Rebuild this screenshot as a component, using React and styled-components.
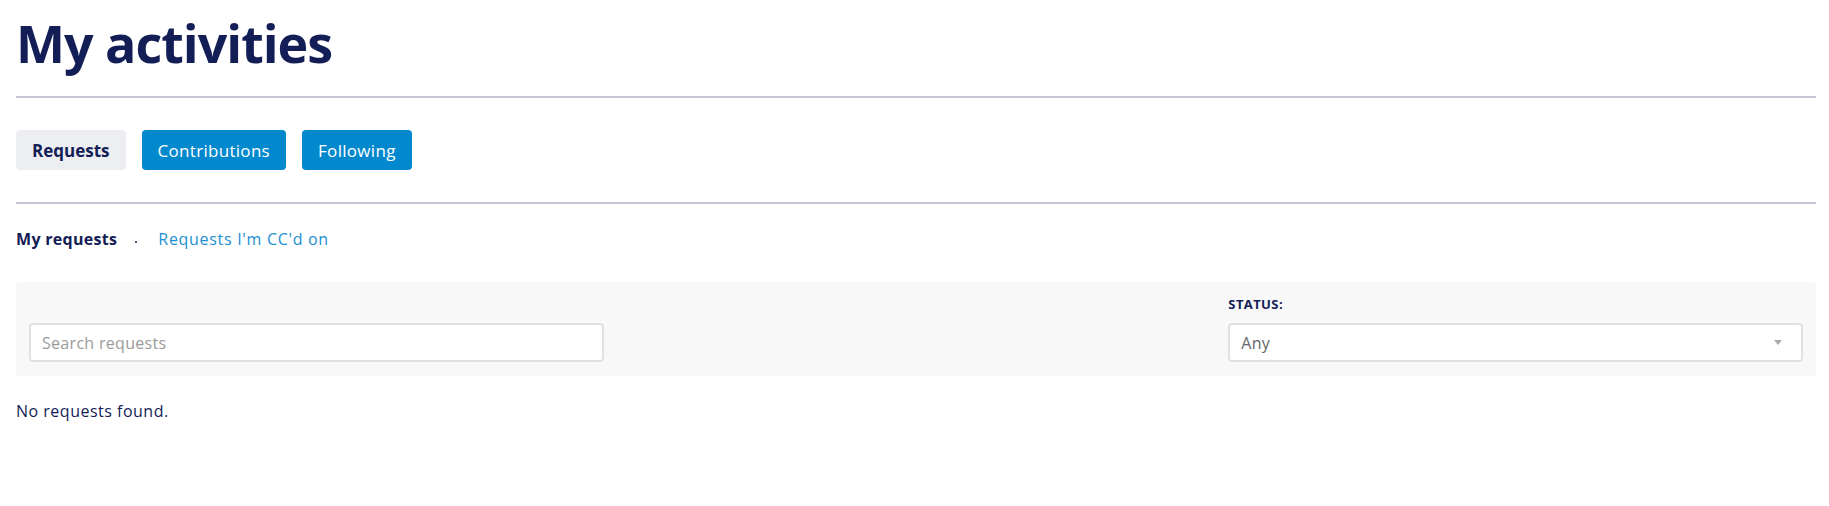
import React from "react";
import styled, { createGlobalStyle } from "styled-components";

const GlobalStyle = createGlobalStyle`
    body {
        margin: 0;
        background: #fff;
        font-family: "Open Sans", "Liberation Sans", sans-serif;
        color: #131d56;
    }
`

const Page = styled.div`
    padding: 0 13px 0 16px;
`

const Title = styled.h1`
    margin: 0;
    padding-top: 11px;
    font-size: 52px;
    line-height: 64px;
    font-weight: 700;
    color: #131d56;
    letter-spacing: -1px;
`

const Rule = styled.hr`
    border: 0;
    height: 2px;
    background: #c4c6d6;
    margin: ${p => p.$top}px 0 0 0;
`

const ButtonRow = styled.div`
    display: flex;
    gap: 16px;
    margin-top: 32px;
`

const TabButton = styled.button`
    height: 40px;
    padding: 0 16px;
    border: 0;
    border-radius: 4px;
    font-family: inherit;
    font-size: 17px;
    font-weight: ${p => (p.$active ? 700 : 400)};
    letter-spacing: ${p => (p.$active ? 0 : 0.3)}px;
    color: ${p => (p.$active ? "#131d56" : "#fff")};
    background: ${p => (p.$active ? "#eceef1" : "#0288cc")};
    cursor: pointer;
`

const SubNav = styled.div`
    display: flex;
    align-items: center;
    margin-top: 24px;
    font-size: 16px;
    line-height: 22px;
`

const SubItem = styled.span`
    font-weight: ${p => (p.$active ? 700 : 400)};
    letter-spacing: ${p => (p.$active ? 0.3 : 0.7)}px;
    color: ${p => (p.$active ? "#131d56" : "#1b8fd2")};
`

const Dot = styled.span`
    width: 2px;
    height: 2px;
    border-radius: 50%;
    background: #131d56;
    margin: 6px 21px 0 18px;
`

const FilterPanel = styled.div`
    margin-top: 32px;
    background: #f8f8f8;
    border-radius: 4px;
    padding: 13px 13px 14px;
    display: grid;
    grid-template-columns: repeat(3, 1fr);
    column-gap: 25px;
    align-items: end;
`

const Field = styled.div`
    display: flex;
    flex-direction: column;
    gap: 10px;
`

const Label = styled.label`
    font-size: 13px;
    font-weight: 700;
    text-transform: uppercase;
    letter-spacing: 0.4px;
    color: #131d56;
    line-height: 18px;
`

const TextInput = styled.input`
    box-sizing: border-box;
    height: 39px;
    width: 100%;
    border: 2px solid #dfe1e5;
    border-radius: 4px;
    background: #fff;
    padding: 0 11px;
    font-family: inherit;
    font-size: 16px;
    letter-spacing: 0.3px;
    color: #333;
    &::placeholder {
        color: #9a9a9a;
    }
`

const SelectBox = styled.div`
    box-sizing: border-box;
    height: 39px;
    border: 2px solid #dfe1e5;
    border-radius: 4px;
    background: #fff;
    padding: 0 11px;
    display: flex;
    align-items: center;
    justify-content: space-between;
    font-size: 16px;
    letter-spacing: 0.3px;
    color: #666;
`

const Caret = styled.span`
    width: 0;
    height: 0;
    border-left: 4px solid transparent;
    border-right: 4px solid transparent;
    border-top: 5px solid #aaa;
    margin-right: 8px;
`

const Empty = styled.p`
    margin: 24px 0 0 0;
    font-size: 16px;
    letter-spacing: 0.5px;
    color: #131d56;
`

const App = () => (
    <Page>
        <GlobalStyle />
        <Title>My activities</Title>
        <Rule $top={21} />
        <ButtonRow>
            <TabButton $active>Requests</TabButton>
            <TabButton>Contributions</TabButton>
            <TabButton>Following</TabButton>
        </ButtonRow>
        <Rule $top={32} />
        <SubNav>
            <SubItem $active>My requests</SubItem>
            <Dot />
            <SubItem>Requests I'm CC'd on</SubItem>
        </SubNav>
        <FilterPanel>
            <Field>
                <TextInput placeholder="Search requests" />
            </Field>
            <div />
            <Field>
                <Label>Status:</Label>
                <SelectBox>
                    <span>Any</span>
                    <Caret />
                </SelectBox>
            </Field>
        </FilterPanel>
        <Empty>No requests found.</Empty>
    </Page>
)

export default App;
